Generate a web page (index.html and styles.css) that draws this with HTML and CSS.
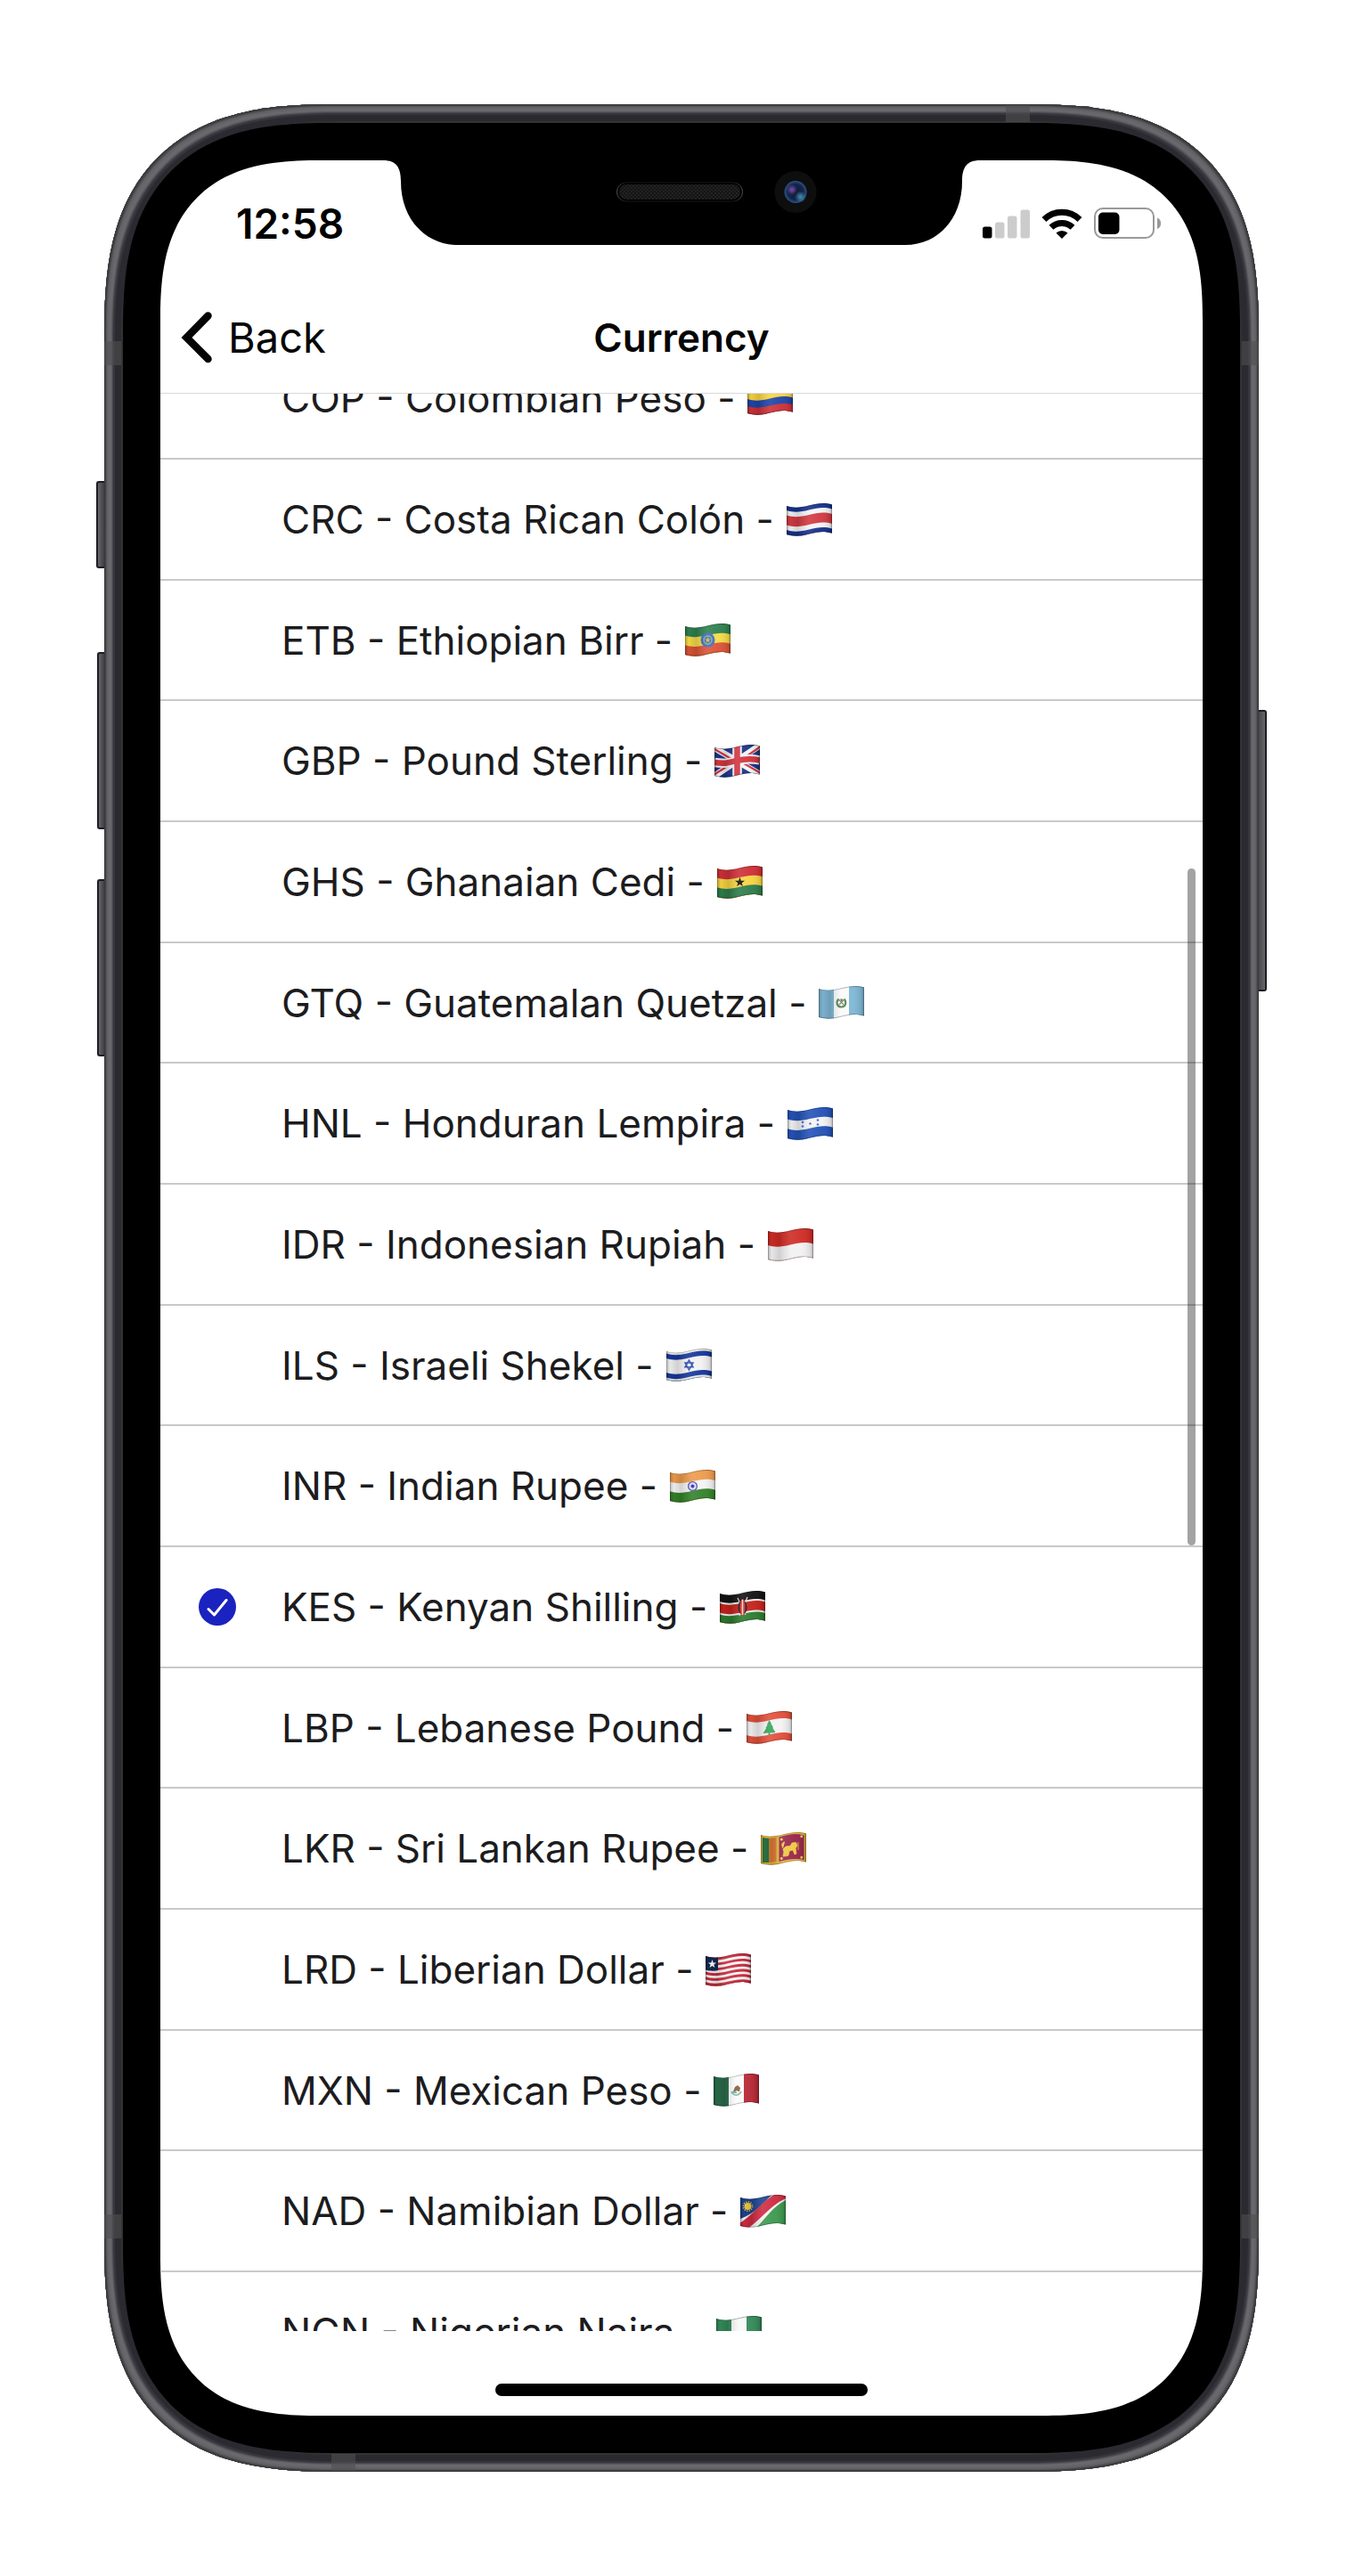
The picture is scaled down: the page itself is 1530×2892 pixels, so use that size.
FILE: index.html
```html
<!DOCTYPE html>
<html lang="en">
<head>
<meta charset="utf-8">
<meta name="viewport" content="width=device-width, initial-scale=1">
<title>Currency</title>
<link rel="stylesheet" href="styles.css">
</head>
<body>
<svg class="defs" aria-hidden="true">
  <defs>
    <clipPath id="cloth"><path d="M0 3C8 5.500 15 5 25 2.500S42-1 51 1.500V33.500C42 31 36 31.500 25 34.500S8 37 0 35z"/></clipPath>
    <path id="w" d="M0 3C8 5.500 15 5 25 2.500S42-1 51 1.500V60H0z"/>
    <linearGradient id="fold">
      <stop offset="0" stop-color="#000" stop-opacity=".25"/>
      <stop offset=".08" stop-color="#000" stop-opacity=".04"/>
      <stop offset=".25" stop-color="#000" stop-opacity=".14"/>
      <stop offset=".5" stop-color="#fff" stop-opacity=".1"/>
      <stop offset=".75" stop-color="#fff" stop-opacity=".04"/>
      <stop offset=".94" stop-color="#000" stop-opacity=".1"/>
      <stop offset="1" stop-color="#000" stop-opacity=".3"/>
    </linearGradient>
    <g id="shade">
      <path d="M0-1H51V38H0z" fill="url(#fold)"/>
      <path d="M0 3C8 5.500 15 5 25 2.500S42-1 51 1.500V33.500C42 31 36 31.500 25 34.500S8 37 0 35z" fill="none" stroke="#000" stroke-opacity=".28" stroke-width="1.400"/>
    </g>
    <path id="star" d="M0-5 1.200-1.600 4.800-1.500 1.900.600 2.900 4 0 2-2.900 4-1.900.600-4.800-1.500-1.200-1.600z"/>
  </defs>
</svg>

<main class="phone">
  <span class="key key-mute"></span>
  <span class="key key-up"></span>
  <span class="key key-down"></span>
  <span class="key key-power"></span>
  <span class="band band-top"></span>
  <span class="band band-bottom"></span>
  <span class="band band-side band-left band-high"></span>
  <span class="band band-side band-left band-low"></span>
  <span class="band band-side band-right band-high"></span>
  <span class="band band-side band-right band-low"></span>

  <div class="bezel">
    <div class="screen">
      <svg class="notch" viewBox="0 0 670 95" aria-hidden="true">
        <defs>
          <pattern id="mesh" width="4" height="4" patternUnits="userSpaceOnUse"><path d="M0 0H4V4H0z" fill="#141414"/><path d="M0 0H2V2H0zM2 2H4V4H2z" fill="#222"/></pattern>
          <radialGradient id="violet"><stop offset="0" stop-color="#7d4db4"/><stop offset="1" stop-color="#7d4db4" stop-opacity="0"/></radialGradient>
          <radialGradient id="cyan"><stop offset="0" stop-color="#4390b4"/><stop offset="1" stop-color="#4390b4" stop-opacity="0"/></radialGradient>
          <radialGradient id="lens"><stop offset="0" stop-color="#121a30"/><stop offset=".7" stop-color="#14244a"/><stop offset="1" stop-color="#2b5685"/></radialGradient>
          <linearGradient id="rim"><stop offset="0" stop-color="#555"/><stop offset=".06" stop-color="#161616"/><stop offset=".94" stop-color="#161616"/><stop offset="1" stop-color="#555"/></linearGradient>
        </defs>
        <path d="M0 0C15 0 20 8 20 24C20 64 46 95 84 95H586C624 95 650 64 650 24C650 8 655 0 670 0z"/>
        <rect x="262.500" y="25" width="141" height="21" rx="10.500" fill="#000" stroke="url(#rim)"/>
        <rect x="265" y="27" width="136" height="17" rx="8.500" fill="url(#mesh)"/>
        <circle cx="463" cy="35.500" r="23.500" fill="#0e0e0f"/>
        <circle cx="463" cy="35.500" r="12.500" fill="url(#lens)"/>
        <circle cx="459" cy="33" r="6" fill="url(#violet)"/>
        <circle cx="468.500" cy="41" r="6.500" fill="url(#cyan)"/>
      </svg>

      <div class="status">
        <time class="clock">12:58</time>
        <div class="indicators">
          <svg width="53" height="34" viewBox="0 0 53 34" role="img" aria-label="Signal, one bar">
            <rect y="20.500" width="10.500" height="13" rx="2.500"/>
            <g fill="#ccc"><rect x="14" y="15.500" width="10.500" height="18" rx="2.500"/><rect x="28" y="8.500" width="10.500" height="25" rx="2.500"/><rect x="42.500" y="1.500" width="10.500" height="32" rx="2.500"/></g>
          </svg>
          <svg width="46" height="34" viewBox="0 0 46 34" role="img" aria-label="Wi-Fi">
            <path d="M3 12.500A28.500 28.500 0 0 1 43 12.500" fill="none" stroke="#000" stroke-width="7"/>
            <path d="M11 21.300A17.500 17.500 0 0 1 35 21.300" fill="none" stroke="#000" stroke-width="7"/>
            <path d="M23 34 16.500 27.500A9.500 9.500 0 0 1 29.500 27.500z"/>
          </svg>
          <svg width="76" height="35" viewBox="0 0 76 35" role="img" aria-label="Battery, low">
            <rect x="1" y="1" width="66" height="33" rx="9" fill="none" stroke="#999" stroke-width="2"/>
            <rect x="5" y="5.500" width="23.500" height="24.500" rx="5"/>
            <path d="M71 11.500C76.500 13 76.500 22.500 71 24z" fill="#999"/>
          </svg>
        </div>
      </div>

      <header class="nav">
        <button class="back" type="button">
          <svg width="36" height="60" viewBox="0 0 36 60" fill="none" stroke="currentColor" stroke-width="8.500" stroke-linecap="round" aria-hidden="true"><path d="M30.500 5.500 6.500 30 30.500 54"/></svg>
          Back
        </button>
        <h1 class="title">Currency</h1>
      </header>

      <form class="viewport">
        <ul class="list">
          <li class="row"><label class="option"><input class="radio" type="radio" name="currency"><span class="name">COP - Colombian Peso -
            <svg class="flag" viewBox="0 0 51 37" role="img" aria-label="Colombia"><g clip-path="url(#cloth)"><use href="#w" y="-3" fill="#f7d444"/><use href="#w" y="16" fill="#1f45a8"/><use href="#w" y="24" fill="#cf3038"/><use href="#shade"/></g></svg></span></label></li>
          <li class="row"><label class="option"><input class="radio" type="radio" name="currency"><span class="name">CRC - Costa Rican Colón -
            <svg class="flag" viewBox="0 0 51 37" role="img" aria-label="Costa Rica"><g clip-path="url(#cloth)"><use href="#w" y="-3" fill="#16318c"/><use href="#w" y="5" fill="#f4f4f6"/><use href="#w" y="10.500" fill="#d13b42"/><use href="#w" y="21.500" fill="#f4f4f6"/><use href="#w" y="27" fill="#16318c"/><use href="#shade"/></g></svg></span></label></li>
          <li class="row"><label class="option"><input class="radio" type="radio" name="currency"><span class="name">ETB - Ethiopian Birr -
            <svg class="flag" viewBox="0 0 51 37" role="img" aria-label="Ethiopia"><g clip-path="url(#cloth)"><use href="#w" y="-3" fill="#2f8150"/><use href="#w" y="10.600" fill="#f5dc48"/><use href="#w" y="21.300" fill="#dc5338"/><circle cx="25.500" cy="18.500" r="8" fill="#3c6fc4"/><circle cx="25.500" cy="18.500" r="4.500" fill="none" stroke="#a7ad70" stroke-width="1.400"/><use href="#star" transform="translate(25.500 18.500) scale(.7)" fill="#c9c163"/><use href="#shade"/></g></svg></span></label></li>
          <li class="row"><label class="option"><input class="radio" type="radio" name="currency"><span class="name">GBP - Pound Sterling -
            <svg class="flag" viewBox="0 0 51 37" role="img" aria-label="United Kingdom"><g clip-path="url(#cloth)"><path d="M0-2H51V40H0z" fill="#1b3489"/><path d="M-1 3 52 34M-1 36 52 0" stroke="#f3f3f6" stroke-width="7"/><path d="M-1 4.500 25 19.500M26 17 52 32M-1 34 25 17.500M26 20 52 2" stroke="#d2353f" stroke-width="2.200"/><path d="M0 20C12 22 17 20 25 18S42 15.500 51 17.500M25.500 0V38" fill="none" stroke="#f3f3f6" stroke-width="10.500"/><path d="M0 20C12 22 17 20 25 18S42 15.500 51 17.500M25.500 0V38" fill="none" stroke="#d2353f" stroke-width="6.500"/><use href="#shade"/></g></svg></span></label></li>
          <li class="row"><label class="option"><input class="radio" type="radio" name="currency"><span class="name">GHS - Ghanaian Cedi -
            <svg class="flag" viewBox="0 0 51 37" role="img" aria-label="Ghana"><g clip-path="url(#cloth)"><use href="#w" y="-3" fill="#cf2f38"/><use href="#w" y="10.600" fill="#f7d444"/><use href="#w" y="21.300" fill="#2d7d4b"/><use href="#star" transform="translate(25.500 18.500) scale(1.150)" fill="#111"/><use href="#shade"/></g></svg></span></label></li>
          <li class="row"><label class="option"><input class="radio" type="radio" name="currency"><span class="name">GTQ - Guatemalan Quetzal -
            <svg class="flag" viewBox="0 0 51 37" role="img" aria-label="Guatemala"><g clip-path="url(#cloth)"><path d="M0-2H51V40H0z" fill="#7fb8d6"/><path d="M17-2H34V40H17z" fill="#fafafa"/><path d="M22.500 14.500C19 18 20.500 23.500 25.500 23.500S31.500 18 28.500 14.500" fill="none" stroke="#4f8256" stroke-width="2.200"/><path d="M22.500 15 28 21M28.500 15 23 21" stroke="#8d8360" stroke-width="1.200"/><path d="M24 14.500H27L26 18z" fill="#2f7b55"/><use href="#shade"/></g></svg></span></label></li>
          <li class="row"><label class="option"><input class="radio" type="radio" name="currency"><span class="name">HNL - Honduran Lempira -
            <svg class="flag" viewBox="0 0 51 37" role="img" aria-label="Honduras"><g clip-path="url(#cloth)"><use href="#w" y="-3" fill="#2453b8"/><use href="#w" y="10.600" fill="#f4f4f4"/><use href="#w" y="21.300" fill="#2453b8"/><g fill="#2a58cc"><use href="#star" transform="translate(17 17) scale(.4)"/><use href="#star" transform="translate(17 21.500) scale(.4)"/><use href="#star" transform="translate(25.500 18.500) scale(.4)"/><use href="#star" transform="translate(34 14.500) scale(.4)"/><use href="#star" transform="translate(34 19.500) scale(.4)"/></g><use href="#shade"/></g></svg></span></label></li>
          <li class="row"><label class="option"><input class="radio" type="radio" name="currency"><span class="name">IDR - Indonesian Rupiah -
            <svg class="flag" viewBox="0 0 51 37" role="img" aria-label="Indonesia"><g clip-path="url(#cloth)"><use href="#w" y="-3" fill="#cf2c25"/><use href="#w" y="16" fill="#f1f1f2"/><use href="#shade"/></g></svg></span></label></li>
          <li class="row"><label class="option"><input class="radio" type="radio" name="currency"><span class="name">ILS - Israeli Shekel -
            <svg class="flag" viewBox="0 0 51 37" role="img" aria-label="Israel"><g clip-path="url(#cloth)"><use href="#w" y="-3" fill="#efeee9"/><use href="#w" y="2.500" fill="#16379b"/><use href="#w" y="8" fill="#f2f2f2"/><use href="#w" y="24" fill="#16379b"/><use href="#w" y="29.500" fill="#efeee9"/><path d="M25.500 13 30 20.800H21zM25.500 24 30 16H21z" fill="none" stroke="#2c4cae" stroke-width="1.500"/><use href="#shade"/></g></svg></span></label></li>
          <li class="row"><label class="option"><input class="radio" type="radio" name="currency"><span class="name">INR - Indian Rupee -
            <svg class="flag" viewBox="0 0 51 37" role="img" aria-label="India"><g clip-path="url(#cloth)"><use href="#w" y="-3" fill="#ee9b4c"/><use href="#w" y="10.600" fill="#f4f4f4"/><use href="#w" y="21.300" fill="#34812a"/><circle cx="25.500" cy="18.500" r="4.900" fill="#dcdcf2" stroke="#4e4cb8" stroke-width="1.300"/><circle cx="25.500" cy="18.500" r="2" fill="#3331a8"/><use href="#shade"/></g></svg></span></label></li>
          <li class="row"><label class="option"><input class="radio" type="radio" name="currency" checked><svg class="tick" width="42" height="42" viewBox="0 0 42 42" fill="none" stroke="#fff" stroke-width="3" stroke-linecap="round" stroke-linejoin="round" aria-hidden="true"><path d="M11 23.500 17.500 30 31 13.500"/></svg><span class="name">KES - Kenyan Shilling -
            <svg class="flag" viewBox="0 0 51 37" role="img" aria-label="Kenya"><g clip-path="url(#cloth)"><use href="#w" y="-3" fill="#121212"/><use href="#w" y="9" fill="#f0f0f0"/><use href="#w" y="11" fill="#c4221c"/><use href="#w" y="21.500" fill="#f0f0f0"/><use href="#w" y="23.500" fill="#2b7c2e"/><path d="M20 8 29 27M31 7 22 28" stroke="#ddd" stroke-width="1.200"/><ellipse cx="25.500" cy="18.500" rx="5" ry="8" fill="#1a1a1a"/><ellipse cx="25.500" cy="18.500" rx="3" ry="9.500" fill="#d8332d"/><path d="M25.500 10V27" stroke="#f3d4d2" stroke-width="1.400"/><use href="#shade"/></g></svg></span></label></li>
          <li class="row"><label class="option"><input class="radio" type="radio" name="currency"><span class="name">LBP - Lebanese Pound -
            <svg class="flag" viewBox="0 0 51 37" role="img" aria-label="Lebanon"><g clip-path="url(#cloth)"><use href="#w" y="-3" fill="#e2503b"/><use href="#w" y="8" fill="#f3f3f3"/><use href="#w" y="24" fill="#e2503b"/><path d="M25.500 10 28 14 27.500 14.500 30 18 29.300 18.700 32.500 24 26.500 24.500V27H24.500V24.500L18.500 25 22 19.500 21.500 19 23.500 15.500 23 15z" fill="#37a55a"/><use href="#shade"/></g></svg></span></label></li>
          <li class="row"><label class="option"><input class="radio" type="radio" name="currency"><span class="name">LKR - Sri Lankan Rupee -
            <svg class="flag" viewBox="0 0 51 37" role="img" aria-label="Sri Lanka"><g clip-path="url(#cloth)"><path d="M0-2H51V40H0z" fill="#e8b93c"/><path d="M2 6 9.500 7V34H2z" fill="#2c7344"/><path d="M9.500 7 17.500 6V33L9.500 34z" fill="#e17a36"/><path d="M20.500 5.500C32 2 40 1 48.500 3.500V31C40 29 32 30 20.500 33z" fill="#98264c"/><path d="M25 27 26 22 25 19 28 16 33 15.500 35 12 39.500 11.500 41 15 39 18 40 24 38 25 36 20 32 21 31 26 28.500 27 29 22.500 27.500 27zM25 18C22.500 14 24 11 27 11M42 11V20" fill="#f0c843" stroke="#f0c843" stroke-width=".8"/><path d="M22 8.500 24.500 7.500M44.500 4.500 47 5M22 30 24.500 29M44.500 28 47 28.500" stroke="#f0d060" stroke-width="2.500"/><use href="#shade"/></g></svg></span></label></li>
          <li class="row"><label class="option"><input class="radio" type="radio" name="currency"><span class="name">LRD - Liberian Dollar -
            <svg class="flag" viewBox="0 0 51 37" role="img" aria-label="Liberia"><g clip-path="url(#cloth)"><use href="#w" y="-3" fill="#c8293c"/><use href="#w" y="3" fill="#f4f4f4"/><use href="#w" y="5.900" fill="#c8293c"/><use href="#w" y="8.800" fill="#f4f4f4"/><use href="#w" y="11.700" fill="#c8293c"/><use href="#w" y="14.600" fill="#f4f4f4"/><use href="#w" y="17.500" fill="#c8293c"/><use href="#w" y="20.400" fill="#f4f4f4"/><use href="#w" y="23.300" fill="#c8293c"/><use href="#w" y="26.200" fill="#f4f4f4"/><use href="#w" y="29.100" fill="#c8293c"/><path d="M0 0H14V19C9 20 5 20 0 18.500z" fill="#14284f"/><use href="#star" transform="translate(7.500 12)" fill="#fff"/><use href="#shade"/></g></svg></span></label></li>
          <li class="row"><label class="option"><input class="radio" type="radio" name="currency"><span class="name">MXN - Mexican Peso -
            <svg class="flag" viewBox="0 0 51 37" role="img" aria-label="Mexico"><g clip-path="url(#cloth)"><path d="M0-2H17V40H0z" fill="#2a6b4a"/><path d="M17-2H34V40H17z" fill="#fafafa"/><path d="M34-2H51V40H34z" fill="#b92a38"/><path d="M20 20C22 25 28 25.500 31 20" fill="none" stroke="#8fbf9f" stroke-width="2"/><path d="M22 20 24 15 27 13 30 16 29 20 25 19 24 22z" fill="#8a5c3c"/><path d="M20.500 21H26" stroke="#6fb4c6" stroke-width="2"/><use href="#shade"/></g></svg></span></label></li>
          <li class="row"><label class="option"><input class="radio" type="radio" name="currency"><span class="name">NAD - Namibian Dollar -
            <svg class="flag" viewBox="0 0 51 37" role="img" aria-label="Namibia"><g clip-path="url(#cloth)"><path d="M0-2H51V40H0z" fill="#f4f4f4"/><path d="M0-2H38C28 6 18 21 0 27z" fill="#1d4391"/><path d="M15 40C28 28 34 15 51 6V40z" fill="#3e9a50"/><path d="M-1 38C20 26 28 8 52-2" fill="none" stroke="#cf2c41" stroke-width="10"/><circle cx="8.500" cy="13" r="4" fill="#f6cf3f"/><circle cx="8.500" cy="13" r="5.200" fill="none" stroke="#f6cf3f" stroke-width="1.500" stroke-dasharray="1.200 1.500"/><use href="#shade"/></g></svg></span></label></li>
          <li class="row"><label class="option"><input class="radio" type="radio" name="currency"><span class="name">NGN - Nigerian Naira -
            <svg class="flag" viewBox="0 0 51 37" role="img" aria-label="Nigeria"><g clip-path="url(#cloth)"><path d="M0-2H51V40H0z" fill="#358a5a"/><path d="M17-2H34V40H17z" fill="#f8f8f8"/><use href="#shade"/></g></svg></span></label></li>
        </ul>
      </form>
      <span class="scrollbar"></span>
      <div class="home"><span class="home-bar"></span></div>
    </div>
  </div>
</main>
</body>
</html>
```
FILE: styles.css
```css
* { box-sizing: border-box; }

body {
  margin: 0;
  padding: 117px;
  background: #fff;
  color: #1c1c1e;
  font-family: Inter, "Liberation Sans", sans-serif;
}

.defs {
  position: absolute;
  width: 0;
  height: 0;
}

/* Device body */
.phone {
  position: relative;
  max-width: 1296px;
  margin: 0 auto;
  padding: 21px;
  border-radius: 205px;
  background: #2a2a30;
  box-shadow:
    inset 0 0 0 1px #39393b,
    inset 0 0 0 2px #444447,
    inset 0 0 0 3px #525257,
    inset 0 0 0 5px #626267,
    inset 0 0 0 8px #68686d,
    inset 0 0 0 9px #5a5a5f,
    inset 0 0 0 10px #48484e,
    inset 0 0 0 12px #36363c,
    inset 0 0 0 19px #2a2a30,
    inset 0 0 0 21px #333334;
}

.bezel {
  padding: 42px;
  border-radius: 184px;
  background: #000;
}

.screen {
  position: relative;
  display: flex;
  flex-direction: column;
  aspect-ratio: 1170 / 2532;
  overflow: hidden;
  border-radius: 142px;
  background: #fff;
}

@supports (corner-shape: superellipse(1.4)) {
  .phone, .bezel, .screen { corner-shape: superellipse(1.4); }
  .phone { border-radius: 260px; }
  .bezel { border-radius: 234px; }
  .screen { border-radius: 180px; }
}

.key {
  position: absolute;
  right: 100%;
  width: 8px;
  border: 2px solid #1d1d24;
  border-right: 0;
  border-radius: 3px 0 0 3px;
  background: linear-gradient(90deg, #66666b, #3e3e43);
}
.key-mute { top: 423px; width: 9px; height: 98px; }
.key-up { top: 615px; height: 199px; }
.key-down { top: 870px; height: 199px; }
.key-power {
  top: 680px;
  right: auto;
  left: 100%;
  width: 9px;
  height: 316px;
  border: 2px solid #1d1d24;
  border-left: 0;
  border-radius: 0 3px 3px 0;
  background: linear-gradient(90deg, #48484c, #66666b);
}

.band {
  position: absolute;
  width: 27px;
  height: 19px;
  background: rgba(80, 80, 80, .6);
}
.band-top { top: 1px; right: 257px; }
.band-bottom { bottom: 1px; left: 255px; }
.band-side { width: 19px; height: 27px; }
.band-left { left: 0; }
.band-right { right: 0; }
.band-high { top: 266px; }
.band-low { bottom: 262px; }

.notch {
  position: absolute;
  top: 0;
  left: 50%;
  width: 670px;
  height: 95px;
  transform: translateX(-50%);
}

/* Status bar */
.status {
  flex: none;
  display: flex;
  align-items: center;
  justify-content: space-between;
  height: 141px;
  padding: 0 46px 0 85px;
}

.clock {
  color: #000;
  font-size: 46px;
  font-weight: 600;
}

.indicators {
  display: flex;
  align-items: center;
  gap: 13px;
}

/* Navigation bar */
.nav {
  flex: none;
  display: grid;
  grid-template-columns: 1fr auto 1fr;
  align-items: center;
  height: 121px;
  padding: 0 23px 5px;
  border-bottom: 1px solid #d8d8d8;
  color: #050505;
}

.back {
  display: flex;
  align-items: center;
  justify-self: start;
  gap: 17px;
  padding: 0;
  border: 0;
  background: none;
  color: inherit;
  font: 400 47px/60px Inter, "Liberation Sans", sans-serif;
}

.title {
  margin: 0;
  font-size: 44px;
  font-weight: 600;
  line-height: 60px;
}

/* Currency list */
.viewport {
  flex: 1;
  min-height: 0;
  overflow: hidden;
}

.list {
  margin: -62px 0 0;
  padding: 0;
  list-style: none;
}

.row {
  height: 136px;
  border-bottom: 2px solid #c9c9cc;
}
.row:nth-child(3n) { height: 135px; }

.option {
  display: grid;
  grid-template-columns: 42px auto;
  column-gap: 51px;
  align-items: center;
  justify-content: start;
  height: 100%;
  padding-left: 43px;
}

.radio {
  grid-area: 1 / 1;
  width: 42px;
  height: 42px;
  margin: 0;
  border-radius: 50%;
  appearance: none;
}
.radio:checked { background: #1a22bf; }

.tick {
  grid-area: 1 / 1;
  z-index: 1;
}

.name {
  grid-area: 1 / 2;
  display: flex;
  align-items: center;
  gap: 14px;
  font-size: 44px;
  line-height: 60px;
  white-space: nowrap;
}

.flag {
  width: 51px;
  height: 37px;
}

.scrollbar {
  position: absolute;
  top: 795px;
  right: 8px;
  width: 9px;
  height: 760px;
  border-radius: 5px;
  background: rgba(0, 0, 0, .36);
}

.home {
  flex: none;
  display: flex;
  justify-content: center;
  padding: 59px 0 22px;
}

.home-bar {
  width: 418px;
  height: 14px;
  border-radius: 7px;
  background: #000;
}
```
